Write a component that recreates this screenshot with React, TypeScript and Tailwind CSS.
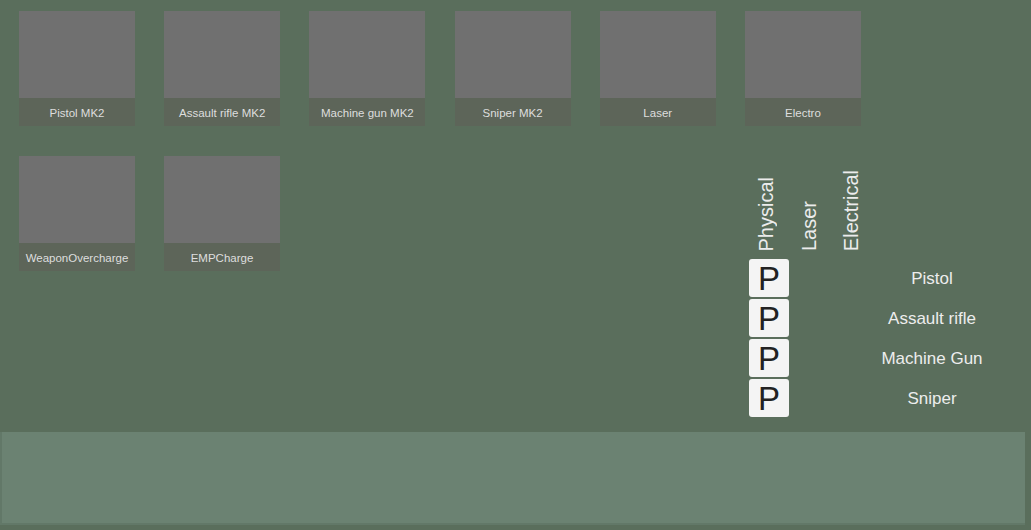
const topCards = ["Pistol MK2", "Assault rifle MK2", "Machine gun MK2", "Sniper MK2", "Laser", "Electro"]
const extraCards = ["WeaponOvercharge", "EMPCharge"]
const weapons = ["Pistol", "Assault rifle", "Machine Gun", "Sniper"]

function Card({ name }: { name: string }) {
  return (
    <div className="flex w-[116px] flex-col">
      <div className="h-[87px] bg-[#707070]" />
      <div className="flex h-[28px] items-center justify-center bg-[#5d6559] pt-[3px] text-[11.5px] text-[#dedede]">
        {name}
      </div>
    </div>
  )
}

export default function App() {
  return (
    <div
      className="flex h-[530px] w-full flex-col bg-[#5a6e5c]"
      style={{ fontFamily: '"Liberation Sans", Arial, sans-serif' }}
    >
      <div className="h-[432px] pl-[19px] pt-[11px]">
        {/* Fila de mejoras */}
        <div className="flex gap-x-[29.2px]">
          {topCards.map((c) => (
            <Card key={c} name={c} />
          ))}
        </div>

        <div className="flex">
          <div className="flex w-[730px] gap-x-[29px] pt-[30px]">
            {extraCards.map((c) => (
              <Card key={c} name={c} />
            ))}
          </div>

          {/* Tabla de daño */}
          <div className="mt-[39px] grid grid-cols-[40px_40px_40px_114px] gap-x-[2px] gap-y-[2px]">
            <div className="flex h-[92px] items-end justify-center pb-[6px] pr-[6px]">
              <span className="rotate-180 text-[20px] leading-none text-[#ececec] [writing-mode:vertical-rl]">
                Physical
              </span>
            </div>
            <div className="flex h-[92px] items-end justify-center pb-[6px] pr-[4px]">
              <span className="rotate-180 text-[20px] leading-none text-[#ececec] [writing-mode:vertical-rl]">
                Laser
              </span>
            </div>
            <div className="flex h-[92px] items-end justify-center pb-[6px] pr-[4px]">
              <span className="rotate-180 text-[20px] leading-none text-[#ececec] [writing-mode:vertical-rl]">
                Electrical
              </span>
            </div>
            <div />

            {weapons.map((w) => (
              <div key={w} className="contents">
                <div className="flex h-[38px] items-center justify-center rounded-[3px] bg-[#f4f4f4] pt-[1px] text-[33px] leading-none text-[#222222]">
                  P
                </div>
                <div />
                <div />
                <div className="flex h-[38px] items-center justify-center pt-[2px] text-[17px] text-[#ededed]">
                  {w}
                </div>
              </div>
            ))}
          </div>
        </div>
      </div>

      {/* Panel inferior */}
      <div className="h-[93px] w-[1025px] border-b-2 border-l-2 border-[#627868] bg-[#6b8272]" />
    </div>
  )
}
